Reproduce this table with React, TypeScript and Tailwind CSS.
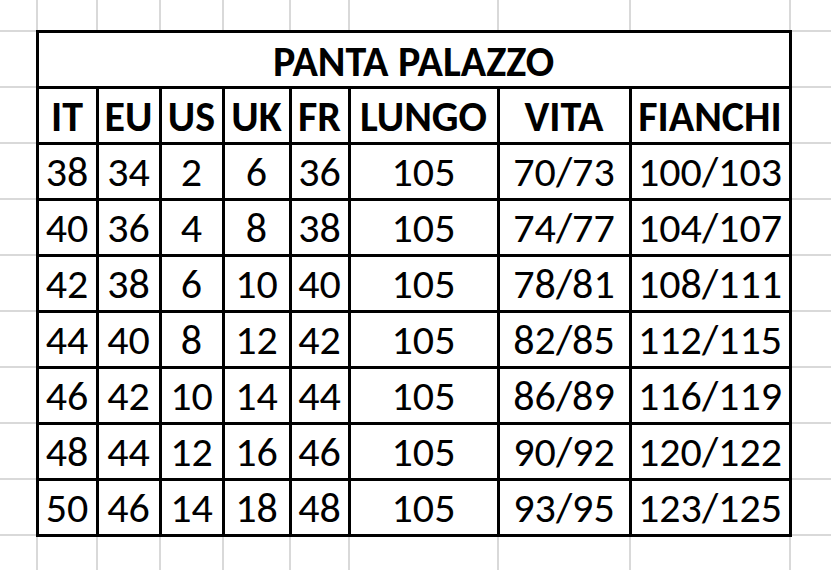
const rows = [
  ["38", "34", "2", "6", "36", "105", "70/73", "100/103"],
  ["40", "36", "4", "8", "38", "105", "74/77", "104/107"],
  ["42", "38", "6", "10", "40", "105", "78/81", "108/111"],
  ["44", "40", "8", "12", "42", "105", "82/85", "112/115"],
  ["46", "42", "10", "14", "44", "105", "86/89", "116/119"],
  ["48", "44", "12", "16", "46", "105", "90/92", "120/122"],
  ["50", "46", "14", "18", "48", "105", "93/95", "123/125"],
];

const headers = ["IT", "EU", "US", "UK", "FR", "LUNGO", "VITA", "FIANCHI"];

// empty spreadsheet cell with light gridlines
function Blank({ first }: { first?: boolean }) {
  return (
    <td
      className={
        first
          ? "border-2 border-l-0 border-[#d9d9d9] p-0"
          : "border-2 border-[#d9d9d9] p-0"
      }
    />
  );
}

export default function App() {
  return (
    <div className="h-[570px] w-[831px] overflow-hidden bg-white font-['Carlito','Open_Sans',sans-serif] text-black">
      <table className="w-[870px] table-fixed border-collapse">
        <colgroup>
          <col className="w-[37px]" />
          <col className="w-[60px]" />
          <col className="w-[63px]" />
          <col className="w-[63px]" />
          <col className="w-[67px]" />
          <col className="w-[59px]" />
          <col className="w-[149px]" />
          <col className="w-[132px]" />
          <col className="w-[160px]" />
          <col className="w-[80px]" />
        </colgroup>
        <tbody>
          {/* partial top row */}
          <tr className="h-[31px]">
            <td className="border-2 border-t-0 border-l-0 border-[#d9d9d9] p-0" />
            {[0, 1, 2, 3, 4, 5, 6, 7, 8].map((i) => (
              <td key={i} className="border-2 border-t-0 border-[#d9d9d9] p-0" />
            ))}
          </tr>

          {/* title */}
          <tr className="h-[56px]">
            <Blank first />
            <td
              colSpan={8}
              className="border-[3px] border-black p-0 pb-[3px] text-center align-bottom text-[42px] font-bold leading-none"
            >
              PANTA PALAZZO
            </td>
            <Blank />
          </tr>

          {/* column headers */}
          <tr className="h-[56px]">
            <Blank first />
            {headers.map((h) => (
              <td
                key={h}
                className="whitespace-nowrap border-[3px] border-black p-0 pb-[4px] text-center align-bottom text-[42px] font-bold leading-none"
              >
                {h}
              </td>
            ))}
            <Blank />
          </tr>

          {rows.map((r) => (
            <tr key={r[0]} className="h-[56px]">
              <Blank first />
              {r.map((v, i) => (
                <td
                  key={i}
                  className="whitespace-nowrap border-[3px] border-black p-0 pb-[5px] text-center align-bottom text-[42px] leading-none"
                >
                  {v}
                </td>
              ))}
              <Blank />
            </tr>
          ))}

          {/* bottom row */}
          <tr className="h-[56px]">
            <Blank first />
            {[0, 1, 2, 3, 4, 5, 6, 7, 8].map((i) => (
              <Blank key={i} />
            ))}
          </tr>
        </tbody>
      </table>
    </div>
  );
}
